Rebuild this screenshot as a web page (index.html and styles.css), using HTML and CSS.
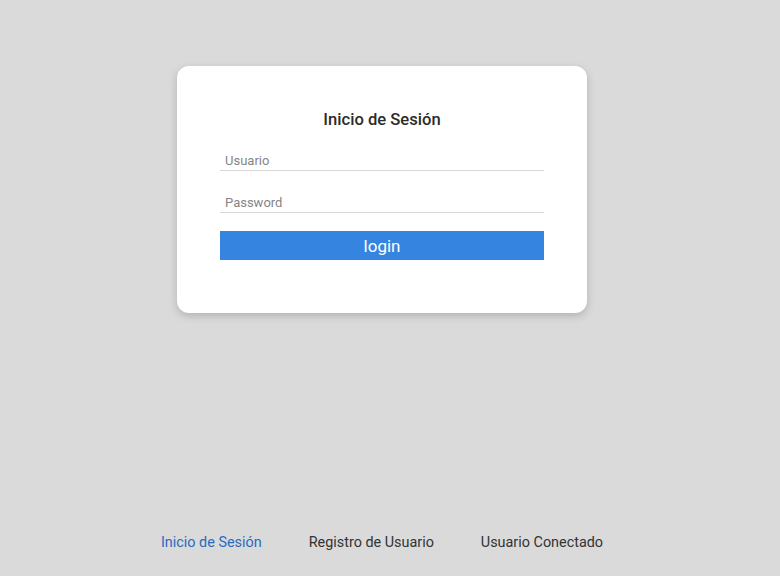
FILE: index.html
```html
<!DOCTYPE html>
<html lang="es">
<head>
<meta charset="utf-8">
<title>Inicio de Sesión</title>
<link rel="stylesheet" href="styles.css">
</head>
<body>
<div class="page">
  <main class="main">
    <form class="card">
      <h1 class="title">Inicio de Sesión</h1>
      <input class="field field-user" type="text" placeholder="Usuario">
      <input class="field field-pass" type="password" placeholder="Password">
      <button class="btn" type="button">login</button>
    </form>
  </main>
  <nav class="nav">
    <a class="nav-link active" href="#">Inicio de Sesión</a>
    <a class="nav-link" href="#">Registro de Usuario</a>
    <a class="nav-link" href="#">Usuario Conectado</a>
  </nav>
</div>
</body>
</html>
```
FILE: styles.css
```css
html, body {
  margin: 0;
  padding: 0;
  background: #dadada;
  font-family: Roboto, "Liberation Sans", sans-serif;
}
.page {
  min-height: 100vh;
  display: flex;
  flex-direction: column;
  padding-right: 16px;
  box-sizing: border-box;
}
.main {
  flex: 1;
  display: flex;
  justify-content: center;
  padding-top: 66px;
}
.card {
  width: 410px;
  height: 247px;
  box-sizing: border-box;
  background: #fff;
  border-radius: 12px;
  box-shadow: 0 3px 8px rgba(0,0,0,0.18);
  padding: 43px 43px 0;
  display: flex;
  flex-direction: column;
}
.title {
  margin: 0;
  font-size: 16.6px;
  line-height: 22px;
  font-weight: 500;
  color: #2b2b2b;
  text-align: center;
}
.field {
  display: block;
  width: 100%;
  box-sizing: border-box;
  height: 22px;
  border: 0;
  border-bottom: 1px solid #d8d8d8;
  padding: 2px 5px 0;
  font-family: Roboto, "Liberation Sans", sans-serif;
  font-size: 13px;
  color: #333;
  background: transparent;
  outline: none;
}
.field::placeholder {
  color: #858585;
}
.field-user {
  margin-top: 18px;
}
.field-pass {
  margin-top: 20px;
}
.btn {
  margin-top: 18px;
  height: 29px;
  width: 100%;
  border: 0;
  background: #3585e0;
  color: #fff;
  font-family: Roboto, "Liberation Sans", sans-serif;
  font-size: 17px;
  padding: 0;
  cursor: pointer;
}
.nav {
  display: flex;
  justify-content: center;
  gap: 47px;
  padding-bottom: 25px;
}
.nav-link {
  font-size: 14.4px;
  line-height: 16px;
  color: #333;
  text-decoration: none;
}
.nav-link.active {
  color: #2a6bbf;
}
```
